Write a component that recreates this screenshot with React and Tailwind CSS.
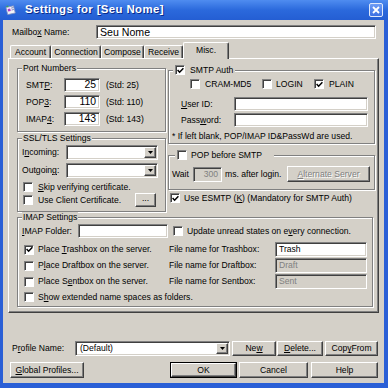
import React from "react";

const sunken =
  "bg-white border border-t-[#808080] border-l-[#808080] border-b-white border-r-white shadow-[inset_1px_1px_0_#404040,inset_-1px_-1px_0_#d4d0c8]";
const raised =
  "bg-[#d4d0c8] border border-t-white border-l-white border-b-[#404040] border-r-[#404040] shadow-[inset_-1px_-1px_0_#808080]";
const etched = "relative border border-[#808080] shadow-[1px_1px_0_#fff,inset_1px_1px_0_#fff]";

function U({ children }) {
  return <span className="underline decoration-[1px] underline-offset-[1px]">{children}</span>;
}

function Check({ on }) {
  return (
    <span className="w-[10px] h-[10px] shrink-0 flex items-center justify-center bg-white border border-t-[#808080] border-l-[#808080] border-b-white border-r-white shadow-[inset_1px_1px_0_#404040]">
      {on && (
        <svg width="7" height="7" viewBox="0 0 7 7">
          <path d="M0.6 3.1 L2.6 5.2 L6.4 1.2" stroke="#000" strokeWidth="1.5" fill="none" />
        </svg>
      )}
    </span>
  );
}

function Combo({ className, text }) {
  return (
    <div className={`${sunken} flex items-stretch p-[1px] shrink-0 ${className}`}>
      <span className="flex-1 flex items-center pl-[3px]">{text}</span>
      <span className={`${raised} w-[12px] flex items-center justify-center`}>
        <svg width="5" height="3" viewBox="0 0 5 3">
          <path d="M0 0h5L2.5 3z" fill="#000" />
        </svg>
      </span>
    </div>
  );
}

function Btn({ className = "", disabled, children }) {
  return (
    <button
      type="button"
      className={`${raised} flex items-center justify-center shrink-0 ${
        disabled ? "text-[#808080] [text-shadow:1px_1px_0_#fff]" : ""
      } ${className}`}
    >
      {children}
    </button>
  );
}

function Field({ className = "", children, disabled }) {
  return (
    <div
      className={`${sunken} flex items-center shrink-0 ${
        disabled ? "!bg-[#d4d0c8] text-[#808080]" : ""
      } ${className}`}
    >
      {children}
    </div>
  );
}

function Tab({ label, selected, className }) {
  if (selected) {
    return (
      <div
        className={`relative z-10 h-[17px] -mb-[1px] bg-[#d4d0c8] border-t border-l border-t-white border-l-white border-r border-r-[#404040] shadow-[inset_-1px_0_0_#808080] rounded-t-[2px] flex items-center justify-center pb-[2px] ${className}`}
      >
        {label}
      </div>
    );
  }
  return (
    <div
      className={`h-[13px] border-t border-l border-t-white border-l-white border-r border-r-[#404040] shadow-[inset_-1px_0_0_#808080] rounded-t-[2px] flex items-center justify-center ${className}`}
    >
      {label}
    </div>
  );
}

export default function App() {
  return (
    <div className="w-[388px] h-[388px] overflow-hidden bg-[#2a5fd6] flex flex-col font-['Liberation_Sans',Arial,sans-serif] text-[8.6px] leading-none text-black select-none">
      {/* title bar */}
      <div className="h-[20px] shrink-0 flex items-center pl-[5px] bg-gradient-to-b from-[#4f8cf0] via-[#2b69dc] to-[#245ed3]">
        <svg width="11" height="10" viewBox="0 0 11 10" className="shrink-0">
          <path d="M1 2.5 L8.5 0.8 L10.3 8 L2.7 9.6 Z" fill="#f4f4f8" stroke="#8090c0" strokeWidth="0.8" />
          <path d="M2.6 4 L5.2 3.4 L5.8 6 L3.2 6.6 Z" fill="#b03cc8" />
          <path d="M6.2 3.1 L8.4 2.6 M6.6 5 L8.8 4.5" stroke="#5a62a8" strokeWidth="0.8" />
          <path d="M0.5 1.6 L3 0.4 L3.6 2" fill="#3cb043" />
        </svg>
        <span className="ml-[9px] text-white font-bold text-[11.4px] tracking-[0.4px] [text-shadow:1px_1px_0_#0b2c8a]">
          Settings for [Seu Nome]
        </span>
        <div className="ml-auto mr-[5px] w-[14px] h-[14px] rounded-[2px] border border-[#dfe8fb] bg-gradient-to-b from-[#6e9cf5] to-[#3b70e2] flex items-center justify-center">
          <svg width="8" height="8" viewBox="0 0 8 8">
            <path d="M1 1 L7 7 M7 1 L1 7" stroke="#fff" strokeWidth="1.8" />
          </svg>
        </div>
      </div>

      {/* dialog body */}
      <div className="flex-1 ml-[3px] mr-[4px] mb-[5px] bg-[#d4d0c8] flex flex-col">
        <div className="mt-[5px] h-[14px] flex items-center pl-[9px]">
          <span className="w-[84px] shrink-0">
            Mailbo<U>x</U> Name:
          </span>
          <Field className="w-[280px] h-[14px] pl-[3px] text-[10.6px]">Seu Nome</Field>
        </div>

        {/* tabs */}
        <div className="mt-[3px] ml-[5px] h-[16px] flex items-end pl-[2px]">
          <Tab label="Account" className="w-[41px]" />
          <Tab label="Connection" className="w-[50px]" />
          <Tab label="Compose" className="w-[43px]" />
          <Tab label="Receive" className="w-[39px]" />
          <Tab label="Misc." selected className="w-[46px]" />
        </div>

        {/* tab panel */}
        <div className="ml-[5px] w-[371px] h-[255px] border border-t-white border-l-white border-b-[#404040] border-r-[#404040] shadow-[inset_-1px_-1px_0_#808080] flex flex-col">
          <div className="flex pl-[8px]">
            {/* left column */}
            <div className="w-[149px] shrink-0 flex flex-col">
              <div className={`${etched} mt-[9px] h-[64px] pt-[9px] flex flex-col gap-[3px]`}>
                <span className="absolute left-[4px] -top-[6px] px-[1px] leading-[10px] bg-[#d4d0c8]">
                  Port Numbers
                </span>
                {[
                  ["SMT", "P", "25"],
                  ["POP", "3", "110"],
                  ["IMAP", "4", "143"],
                ].map(([a, u, v]) => (
                  <div key={a} className="h-[14px] flex items-center pl-[8px]">
                    <span className="w-[38px] shrink-0">
                      {a}
                      <U>{u}</U>:
                    </span>
                    <Field className="w-[36px] h-[14px] justify-end pr-[3px] text-[10.4px]">{v}</Field>
                    <span className="ml-[6px]">(Std: {v})</span>
                  </div>
                ))}
              </div>

              <div className={`${etched} mt-[6px] h-[74px] pt-[6px] flex flex-col`}>
                <span className="absolute left-[4px] -top-[6px] px-[1px] leading-[10px] bg-[#d4d0c8]">
                  SSL/TLS Settings
                </span>
                <div className="h-[15px] flex items-center pl-[4px]">
                  <span className="w-[44px] shrink-0">
                    I<U>n</U>coming:
                  </span>
                  <Combo className="w-[92px] h-[15px]" />
                </div>
                <div className="mt-[3px] h-[15px] flex items-center pl-[4px]">
                  <span className="w-[44px] shrink-0">
                    Outgoin<U>g</U>:
                  </span>
                  <Combo className="w-[92px] h-[15px]" />
                </div>
                <div className="mt-[3px] h-[12px] flex items-center pl-[5px]">
                  <Check />
                  <span className="ml-[5px]">
                    <U>S</U>kip verifying certificate.
                  </span>
                </div>
                <div className="h-[14px] flex items-center pl-[5px]">
                  <Check />
                  <span className="ml-[5px]">Use Client Certificate.</span>
                  <Btn className="ml-auto mr-[9px] w-[21px] h-[14px] pb-[3px]">...</Btn>
                </div>
              </div>
            </div>

            {/* right column */}
            <div className="ml-[2px] w-[207px] shrink-0 flex flex-col">
              <div className={`${etched} mt-[11px] h-[74px] pt-[7px] flex flex-col`}>
                <div className="absolute left-[4px] -top-[7px] h-[12px] px-[2px] flex items-center bg-[#d4d0c8]">
                  <Check on />
                  <span className="ml-[5px]">SMTP Auth</span>
                </div>
                <div className="h-[12px] flex items-center pl-[21px]">
                  <div className="w-[72px] shrink-0 flex items-center">
                    <Check />
                    <span className="ml-[5px]">CRAM-MD5</span>
                  </div>
                  <div className="w-[52px] shrink-0 flex items-center">
                    <Check />
                    <span className="ml-[4px]">LOGIN</span>
                  </div>
                  <div className="flex items-center">
                    <Check on />
                    <span className="ml-[5px]">PLAIN</span>
                  </div>
                </div>
                <div className="mt-[7px] h-[14px] flex items-center pl-[12px]">
                  <span className="w-[53px] shrink-0">
                    <U>U</U>ser ID:
                  </span>
                  <Field className="w-[134px] h-[14px]" />
                </div>
                <div className="mt-[2px] h-[14px] flex items-center pl-[12px]">
                  <span className="w-[53px] shrink-0">
                    Pass<U>w</U>ord:
                  </span>
                  <Field className="w-[134px] h-[14px]" />
                </div>
                <div className="mt-[3px] h-[12px] flex items-center pl-[3px]">
                  * If left blank, POP/IMAP ID&amp;PassWd are used.
                </div>
              </div>

              <div className={`${etched} mt-[11px] h-[35px] pt-[10px] flex flex-col`}>
                <div className="absolute left-[6px] -top-[7px] h-[12px] pl-[2px] pr-[12px] flex items-center bg-[#d4d0c8]">
                  <Check />
                  <span className="ml-[4px]">POP before SMTP</span>
                </div>
                <div className="h-[16px] flex items-center pl-[3px]">
                  <span className="w-[21px] shrink-0">Wait</span>
                  <Field disabled className="w-[29px] h-[15px] justify-end pr-[3px]">
                    300
                  </Field>
                  <span className="ml-[3px]">ms. after login.</span>
                  <Btn disabled className="ml-auto mr-[4px] w-[83px] h-[16px]">
                    <U>A</U>lternate Server
                  </Btn>
                </div>
              </div>

              <div className="mt-[2px] h-[12px] flex items-center pl-[2px]">
                <Check on />
                <span className="ml-[4px]">
                  Use ESMTP (<U>K</U>) (Mandatory for SMTP Auth)
                </span>
              </div>
            </div>
          </div>

          {/* IMAP settings */}
          <div className={`${etched} ml-[8px] mt-[5px] w-[356px] h-[90px] pt-[6px] flex flex-col`}>
            <span className="absolute left-[4px] -top-[6px] px-[1px] leading-[10px] bg-[#d4d0c8]">
              IMAP Settings
            </span>
            <div className="h-[14px] flex items-center pl-[4px]">
              <span className="w-[56px] shrink-0">
                <U>I</U>MAP Folder:
              </span>
              <Field className="w-[90px] h-[14px]" />
              <span className="ml-[5px]">
                <Check />
              </span>
              <span className="ml-[4px]">
                Update unread states on e<U>v</U>ery connection.
              </span>
            </div>
            {[
              [<>Place <U>T</U>rashbox on the server.</>, true, "Trashbox", "Trash", false],
              [<>P<U>l</U>ace Draftbox on the server.</>, false, "Draftbox", "Draft", true],
              [<>Place S<U>e</U>ntbox on the server.</>, false, "Sentbox", "Sent", true],
            ].map(([label, on, box, val, dis], i) => (
              <div key={box} className={`${i === 0 ? "mt-[4px]" : "mt-[1px]"} h-[15px] flex items-center`}>
                <div className="w-[151px] shrink-0 flex items-center pl-[6px]">
                  <Check on={on} />
                  <span className="ml-[4px]">{label}</span>
                </div>
                <span className="w-[106px] shrink-0">File name for {box}:</span>
                <Field disabled={dis} className="w-[92px] h-[15px] pl-[3px]">
                  {val}
                </Field>
              </div>
            ))}
            <div className="mt-[2px] h-[12px] flex items-center pl-[6px]">
              <Check />
              <span className="ml-[4px]">
                S<U>h</U>ow extended name spaces as folders.
              </span>
            </div>
          </div>
        </div>

        {/* profile row */}
        <div className="mt-[28px] h-[15px] flex items-center pl-[9px]">
          <span className="w-[63px] shrink-0">
            P<U>r</U>ofile Name:
          </span>
          <Combo className="w-[155px] h-[15px]" text="(Default)" />
          <Btn className="ml-[2px] w-[44px] h-[15px]">
            Ne<U>w</U>
          </Btn>
          <Btn className="ml-[1px] w-[46px] h-[15px]">
            <U>D</U>elete...
          </Btn>
          <Btn className="ml-[2px] w-[53px] h-[15px]">
            Cop<U>y</U> From
          </Btn>
        </div>

        {/* dialog buttons */}
        <div className="mt-[6px] h-[16px] flex items-center pl-[7px]">
          <Btn className="w-[74px] h-[16px]">
            <U>G</U>lobal Profiles...
          </Btn>
          <div className="ml-[86px] w-[67px] h-[16px] border border-black flex">
            <Btn className="w-full h-full">OK</Btn>
          </div>
          <Btn className="ml-[2px] w-[69px] h-[16px]">Cancel</Btn>
          <Btn className="ml-[3px] w-[67px] h-[16px]">Help</Btn>
        </div>
      </div>
    </div>
  );
}
